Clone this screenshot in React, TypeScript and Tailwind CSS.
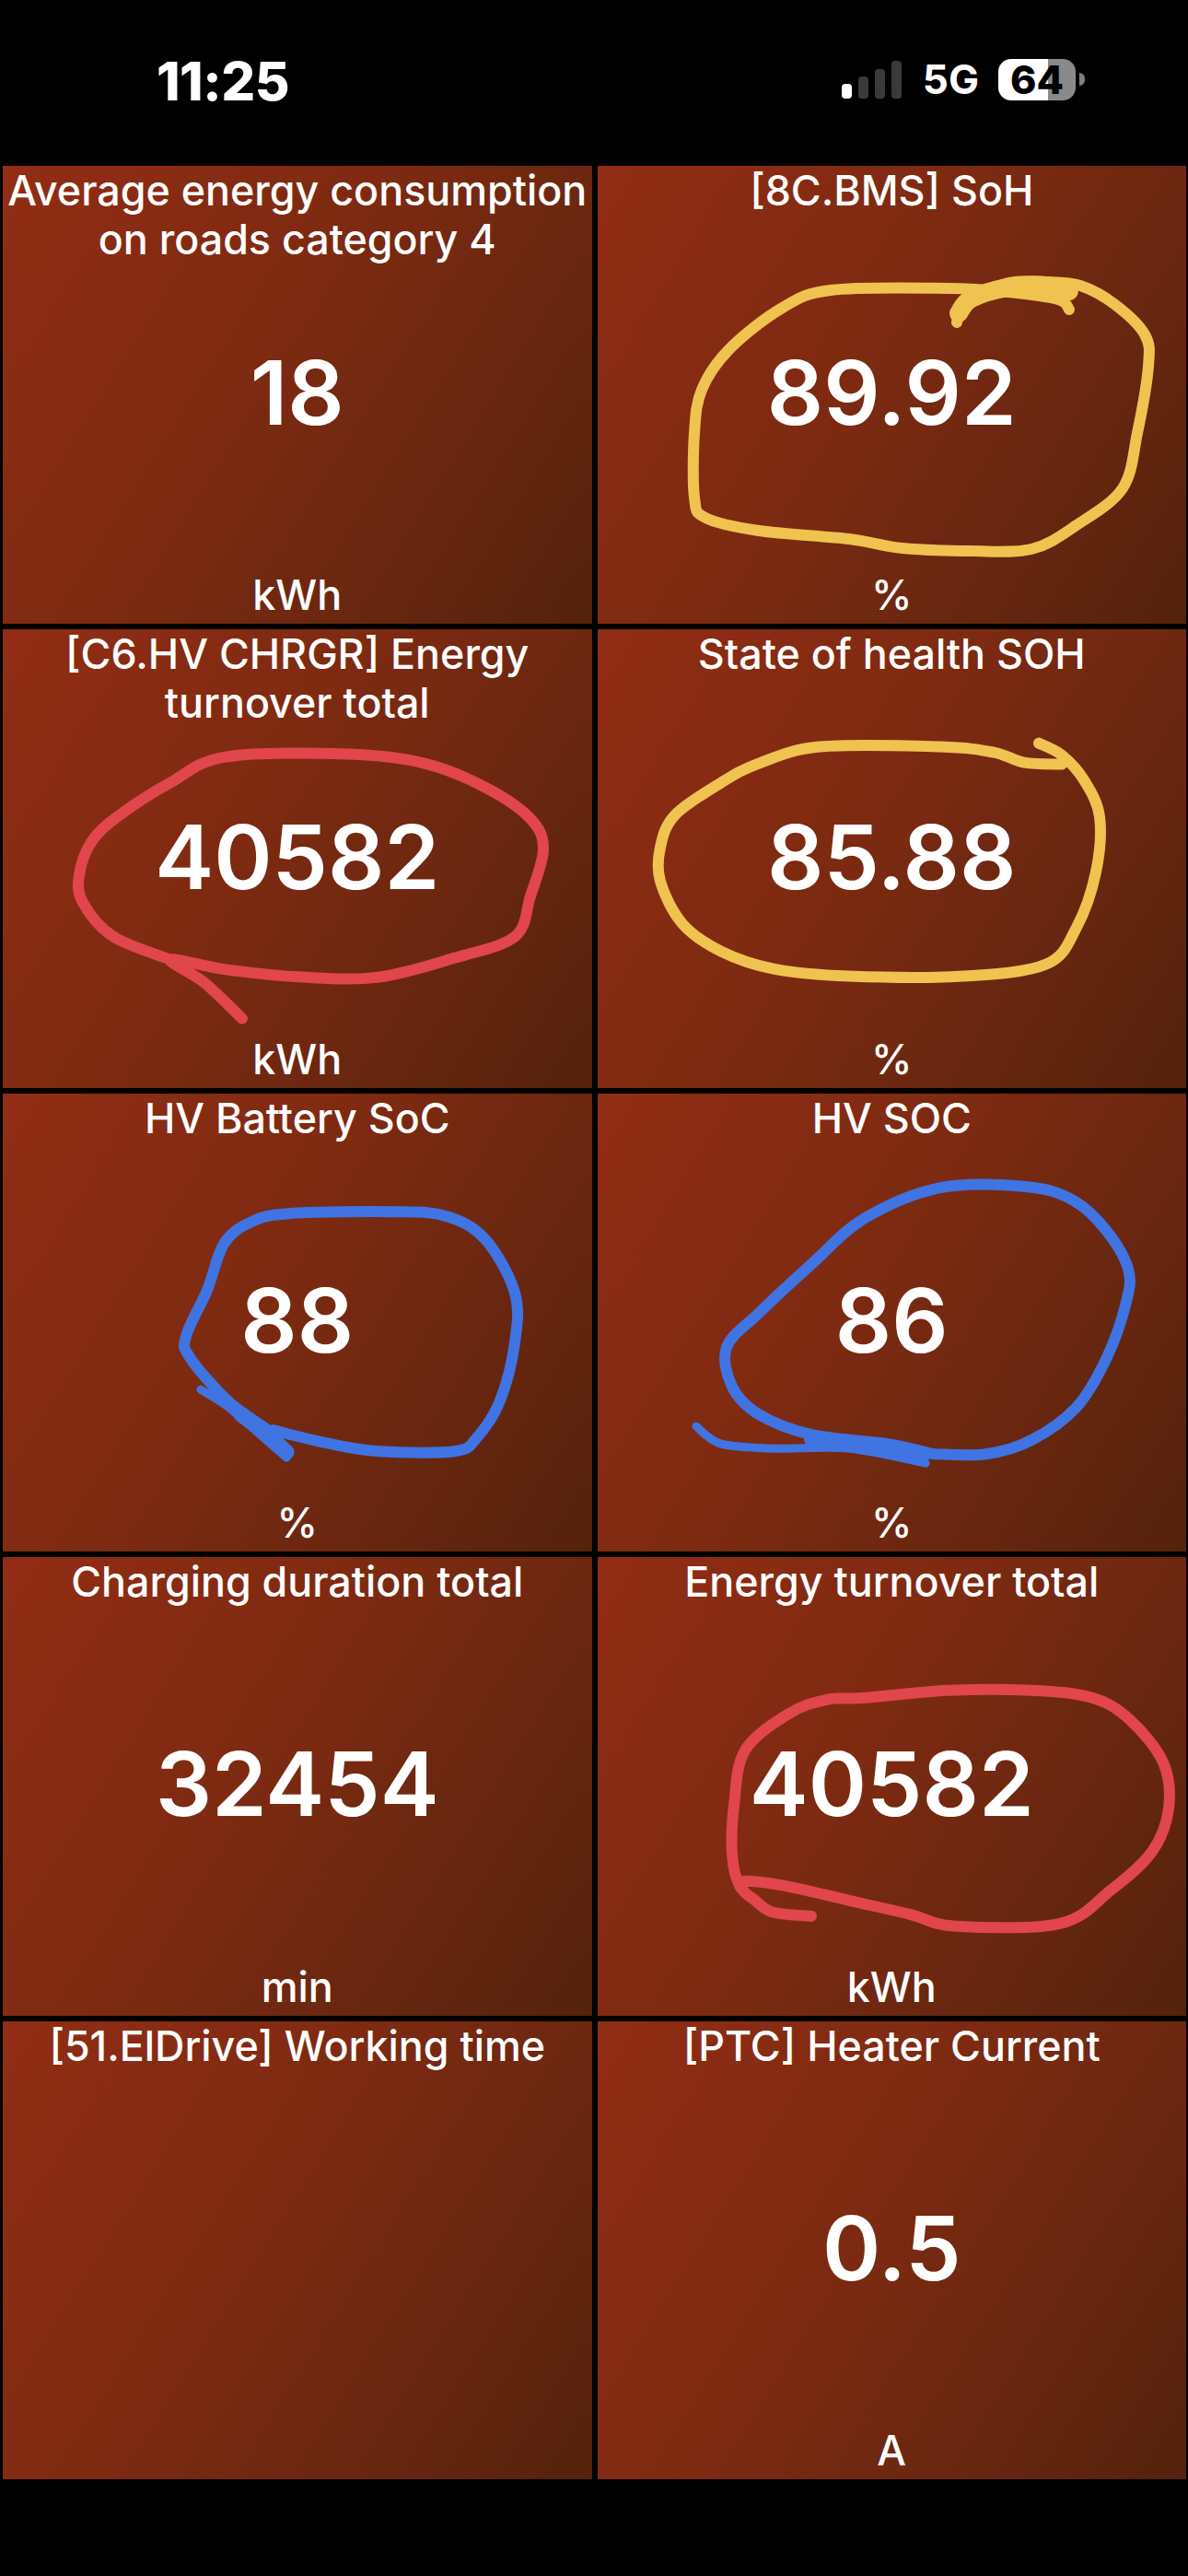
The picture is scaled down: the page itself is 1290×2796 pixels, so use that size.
type Pt = [number, number]

interface Stroke {
  color: string
  width: number
  pts: Pt[]
}

interface Tile {
  title: string
  value: string
  unit: string
  marks?: Stroke[]
}

const YELLOW = '#f0c24f'
const RED = '#e0464c'
const BLUE = '#3f74e2'

// catmull-rom through the points, good enough for pen scribbles
function smooth(pts: Pt[]) {
  let d = `M${pts[0][0]} ${pts[0][1]}`
  for (let i = 0; i < pts.length - 1; i++) {
    const p0 = pts[Math.max(i - 1, 0)]
    const p1 = pts[i]
    const p2 = pts[i + 1]
    const p3 = pts[Math.min(i + 2, pts.length - 1)]
    const c1x = p1[0] + (p2[0] - p0[0]) / 6
    const c1y = p1[1] + (p2[1] - p0[1]) / 6
    const c2x = p2[0] - (p3[0] - p1[0]) / 6
    const c2y = p2[1] - (p3[1] - p1[1]) / 6
    d += ` C${c1x} ${c1y} ${c2x} ${c2y} ${p2[0]} ${p2[1]}`
  }
  return d
}

const tiles: Tile[] = [
  { title: 'Average energy consumption on roads category 4', value: '18', unit: 'kWh' },
  {
    title: '[8C.BMS] SoH',
    value: '89.92',
    unit: '%',
    marks: [
      {
        color: YELLOW,
        width: 12,
        pts: [
          [1038, 350], [1045, 327], [1094, 307], [1135, 306], [1172, 310], [1209, 330], [1242, 363], [1246, 397],
          [1234, 470], [1218, 530], [1168, 570], [1119, 596], [1053, 598], [979, 595], [921, 585], [823, 576],
          [765, 562], [753, 540], [753, 470], [761, 423], [790, 380], [847, 335], [901, 315], [1028, 313],
          [1094, 317], [1148, 325], [1160, 336],
        ],
      },
      { color: YELLOW, width: 20, pts: [[1040, 340], [1054, 324], [1094, 312], [1135, 310], [1160, 316]] },
    ],
  },
  {
    title: '[C6.HV CHRGR] Energy turnover total',
    value: '40582',
    unit: 'kWh',
    marks: [
      {
        color: RED,
        width: 12,
        pts: [
          [185, 1042], [123, 1017], [90, 980], [86, 950], [100, 913], [130, 885], [185, 850], [245, 822], [378, 819],
          [461, 829], [527, 855], [576, 889], [590, 922], [576, 973], [559, 1017], [494, 1040], [411, 1061],
          [329, 1061], [247, 1053], [185, 1042], [222, 1067], [263, 1106],
        ],
      },
    ],
  },
  {
    title: 'State of health SOH',
    value: '85.88',
    unit: '%',
    marks: [
      {
        color: YELLOW,
        width: 12,
        pts: [
          [1152, 830], [1111, 828], [1078, 817], [1020, 811], [889, 811], [823, 829], [782, 850], [732, 885], [716, 920],
          [716, 957], [740, 1003], [782, 1033], [839, 1052], [921, 1060], [1045, 1060], [1135, 1047], [1168, 1007],
          [1189, 947], [1193, 887], [1176, 847], [1152, 820], [1127, 807],
        ],
      },
    ],
  },
  {
    title: 'HV Battery SoC',
    value: '88',
    unit: '%',
    marks: [
      {
        color: BLUE,
        width: 12,
        pts: [
          [288, 1550], [247, 1520], [206, 1473], [202, 1450], [225, 1400], [243, 1350], [271, 1327], [313, 1317],
          [428, 1315], [485, 1320], [527, 1345], [559, 1403], [559, 1457], [543, 1520], [518, 1560], [494, 1575],
          [411, 1575], [354, 1566], [296, 1552],
        ],
      },
      { color: BLUE, width: 9, pts: [[218, 1508], [245, 1525], [271, 1547], [311, 1582]] },
      { color: BLUE, width: 17, pts: [[262, 1535], [288, 1555], [311, 1576]] },
    ],
  },
  {
    title: 'HV SOC',
    value: '86',
    unit: '%',
    marks: [
      {
        color: BLUE,
        width: 12,
        pts: [
          [1012, 1578], [1070, 1578], [1119, 1563], [1168, 1527], [1201, 1473], [1222, 1413], [1224, 1377], [1200, 1335],
          [1165, 1303], [1115, 1288], [1020, 1289], [938, 1322], [880, 1372], [823, 1425], [788, 1462], [794, 1505],
          [823, 1535], [880, 1557], [963, 1567], [1012, 1578],
        ],
      },
      { color: BLUE, width: 9, pts: [[755, 1548], [782, 1567], [839, 1572], [921, 1572], [1004, 1588]] },
      { color: BLUE, width: 16, pts: [[880, 1562], [963, 1572], [1000, 1582]] },
    ],
  },
  { title: 'Charging duration total', value: '32454', unit: 'min' },
  {
    title: 'Energy turnover total',
    value: '40582',
    unit: 'kWh',
    marks: [
      {
        color: RED,
        width: 12,
        pts: [
          [880, 2080], [839, 2076], [819, 2063], [802, 2047], [794, 2013], [796, 1960], [808, 1900], [856, 1860],
          [897, 1845], [938, 1843], [1028, 1835], [1119, 1835], [1185, 1843], [1226, 1867], [1262, 1913], [1268, 1963],
          [1250, 2010], [1205, 2052], [1150, 2088], [1037, 2091], [987, 2078], [921, 2063], [856, 2048], [810, 2042],
          [802, 2047],
        ],
      },
    ],
  },
  { title: '[51.ElDrive] Working time', value: '', unit: '' },
  { title: '[PTC] Heater Current', value: '0.5', unit: 'A' },
]

function StatusBar() {
  return (
    <div className="h-[180px] flex items-start text-white font-bold">
      <div className="ml-[170px] mt-[54px] text-[58px] leading-[68px] font-extrabold tracking-[-0.5px]">11:25</div>
      <div className="ml-auto mr-[112px] mt-[64px] flex items-start">
        {/* signal */}
        <div className="mt-[2px] h-[41px] flex items-end gap-[7px]">
          <div className="w-[11px] h-[16px] rounded-[4px] bg-white" />
          <div className="w-[11px] h-[24px] rounded-[4px] bg-[#3a3a3a]" />
          <div className="w-[11px] h-[32px] rounded-[4px] bg-[#3a3a3a]" />
          <div className="w-[11px] h-[41px] rounded-[4px] bg-[#3a3a3a]" />
        </div>
        <div className="ml-[23px] mt-[-4px] text-[44px] leading-[53px]">5G</div>
        {/* battery */}
        <div className="ml-[21px] w-[84px] h-[45px] rounded-[14px] bg-[linear-gradient(90deg,#fff_64%,#8a8a8a_64%)] flex items-center justify-center text-black text-[43px] font-extrabold leading-none">
          64
        </div>
        <div className="ml-[4px] mt-[15px] w-[6px] h-[14px] rounded-r-full bg-[#7d7d7d]" />
      </div>
    </div>
  )
}

function TileCard({ tile, row, col }: { tile: Tile; row: number; col: number }) {
  const x = col === 0 ? 3 : 648
  const y = 180 + row * 503.4
  return (
    <div className="relative h-[497.4px] grid grid-rows-[1fr_auto_1fr] text-center text-white font-medium bg-[linear-gradient(122deg,#912d14_0%,#7c2a11_45%,#672610_75%,#54220c_100%)]">
      <div className="pt-[1px] text-[44.8px] leading-[53px]">{tile.title}</div>
      <div className="h-[94px] mb-[5px] text-[96px] leading-[94px] font-semibold">{tile.value}</div>
      <div className="self-end pb-[4px] h-[57px] text-[44.8px] leading-[53px]">{tile.unit}</div>
      {tile.marks && (
        <svg className="absolute inset-0 w-full h-full pointer-events-none" viewBox={`${x} ${y} 639.5 497.4`} fill="none">
          {tile.marks.map((m, i) => (
            <path key={i} d={smooth(m.pts)} stroke={m.color} strokeWidth={m.width} strokeLinecap="round" strokeLinejoin="round" />
          ))}
        </svg>
      )}
    </div>
  )
}

export default function App() {
  return (
    <div className="h-[2796px] bg-black font-[Inter,sans-serif]">
      <StatusBar />
      <div className="grid grid-cols-2 gap-[6px] pl-[3px] pr-[2px]">
        {tiles.map((tile, i) => (
          <TileCard key={i} tile={tile} row={Math.floor(i / 2)} col={i % 2} />
        ))}
      </div>
    </div>
  )
}
